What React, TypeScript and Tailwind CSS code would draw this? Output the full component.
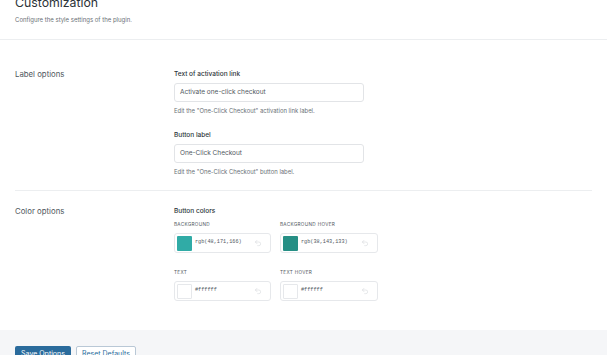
import { Undo2 } from 'lucide-react'

function TextField({ label, value, help, className = '' }: { label: string; value: string; help: string; className?: string }) {
  return (
    <div className={className}>
      <div className="text-[6.5px] leading-[12px] font-medium text-[#2c3338]">{label}</div>
      <div className="mt-[3px] w-[190px] h-[19px] rounded-[3px] border border-[#e2e4e7] flex items-center px-[5px] text-[6.5px] text-[#50575e]">
        {value}
      </div>
      <div className="mt-[4px] text-[5.9px] leading-[10px] text-[#6b7177]">{help}</div>
    </div>
  )
}

function ColorField({ label, color, value }: { label: string; color: string; value: string }) {
  const isWhite = value === '#ffffff'
  return (
    <div>
      <div className="text-[4.7px] leading-[8px] tracking-[0.3px] uppercase text-[#50575e]">{label}</div>
      <div className="mt-[5px] h-[20px] rounded-[3px] border border-[#e6e8eb] flex items-center pl-[2px] pr-[8px]">
        <div
          className={`w-[15px] h-[15px] rounded-[1px] ${isWhite ? 'border border-[#e6e8eb]' : ''}`}
          style={{ backgroundColor: color }}
        />
        <span className="ml-[3px] font-['Liberation_Mono',monospace] text-[5.2px] text-[#50575e] flex-1">{value}</span>
        <Undo2 size={8} strokeWidth={1.5} className="text-[#cfd3d7]" />
      </div>
    </div>
  )
}

export default function App() {
  return (
    <div className="w-[607px] h-[355px] overflow-hidden bg-white font-['Inter',sans-serif] flex flex-col">
      {/* header */}
      <header className="px-[15px] h-[40px] shrink-0 border-b border-[#eceef0]">
        <h1 className="mt-[-5.5px] text-[12.3px] leading-[16px] text-[#2c3338]">Customization</h1>
        <p className="mt-[4px] text-[6px] leading-[10px] text-[#6b7177]">Configure the style settings of the plugin.</p>
      </header>

      <main className="flex-1 px-[15px]">
        {/* Label options */}
        <section className="flex pt-[28px] pb-[13px] border-b border-[#eceef0]">
          <div className="w-[159px] text-[7.8px] leading-[12px] text-[#50575e]">Label options</div>
          <div>
            <TextField
              label="Text of activation link"
              value="Activate one-click checkout"
              help={'Edit the "One-Click Checkout" activation link label.'}
            />
            <TextField
              className="mt-[13px]"
              label="Button label"
              value="One-Click Checkout"
              help={'Edit the "One-Click Checkout" button label.'}
            />
          </div>
        </section>

        {/* Color options */}
        <section className="flex pt-[14px]">
          <div className="w-[159px] text-[7.8px] leading-[12px] text-[#50575e]">Color options</div>
          <div>
            <div className="text-[6.5px] leading-[12px] font-medium text-[#2c3338]">Button colors</div>
            <div className="mt-[3px] grid grid-cols-[97px_98px] gap-x-[9px] gap-y-[15px]">
              <ColorField label="Background" color="rgb(48,171,166)" value="rgb(48,171,166)" />
              <ColorField label="Background hover" color="rgb(38,143,133)" value="rgb(38,143,133)" />
              <ColorField label="Text" color="#ffffff" value="#ffffff" />
              <ColorField label="Text hover" color="#ffffff" value="#ffffff" />
            </div>
          </div>
        </section>
      </main>

      {/* footer */}
      <footer className="h-[25px] shrink-0 bg-[#f5f6f8] px-[15px] pt-[16px] flex gap-[5px] items-start">
        <button className="w-[56px] h-[16px] rounded-[2px] bg-[#2a6b9c] text-white text-[7px] leading-[14px]">Save Options</button>
        <button className="w-[60px] h-[16px] rounded-[2px] bg-white border border-[#b9c8d6] text-[#2a6b9c] text-[7px] leading-[14px]">Reset Defaults</button>
      </footer>
    </div>
  )
}
